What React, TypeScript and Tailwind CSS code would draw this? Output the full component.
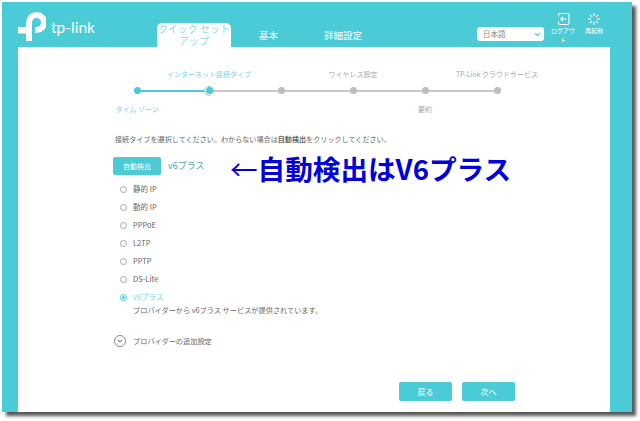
import { ChevronDown } from "lucide-react";

const jp = "font-['Noto_Sans_CJK_JP','Noto_Sans',sans-serif]";

const options = ["静的 IP", "動的 IP", "PPPoE", "L2TP", "PPTP", "DS-Lite"];

function Logo() {
  return (
    <svg width="28" height="30" viewBox="0 0 28 30" fill="none">
      <path
        d="M11 29 V10.5 a7.5 7.5 0 1 1 7.5 7.5 h-1.5"
        stroke="white"
        strokeWidth="6"
      />
      <rect x="0" y="15" width="11" height="6.5" fill="white" />
    </svg>
  );
}

function LogoutIcon() {
  return (
    <svg width="13" height="14" viewBox="0 0 13 14" fill="none" stroke="white" strokeWidth="1.1">
      <path d="M3 1.5 H10.5 a1.5 1.5 0 0 1 1.5 1.5 V11 a1.5 1.5 0 0 1 -1.5 1.5 H3 a1.5 1.5 0 0 1 -1.5 -1.5 V9.5 M1.5 4.5 V3 a1.5 1.5 0 0 1 1.5 -1.5" />
      <path d="M9.5 7 H4 M6 4.8 L3.8 7 L6 9.2" />
    </svg>
  );
}

function RebootIcon() {
  return (
    <svg width="14" height="14" viewBox="0 0 14 14" fill="none" stroke="white" strokeWidth="1.1">
      <path d="M7 1 V4.2 M7 9.8 V13 M1 7 H4.2 M9.8 7 H13 M2.8 2.8 L5 5 M9 9 L11.2 11.2 M11.2 2.8 L9 5 M5 9 L2.8 11.2" />
    </svg>
  );
}

function Dot() {
  return <span className="h-[7px] w-[7px] shrink-0 rounded-full bg-[#bdbdbd]" />;
}

function Radio({ checked }: { checked?: boolean }) {
  return (
    <span
      className={
        checked
          ? "flex h-[7px] w-[7px] items-center justify-center rounded-full border border-[#4acbd6]"
          : "h-[7px] w-[7px] rounded-full border border-[#a8a8a8]"
      }
    >
      {checked && <span className="h-[3px] w-[3px] rounded-full bg-[#4acbd6]" />}
    </span>
  );
}

export default function App() {
  return (
    <div className={`h-[421px] w-[640px] overflow-hidden bg-white p-[2px] ${jp}`}>
      <div className="flex h-[410px] w-[630px] flex-col bg-[#4acbd6] shadow-[4px_4px_3px_rgba(0,0,0,0.65)]">
        {/* header */}
        <header className="flex h-[45px] shrink-0 text-white">
          <div className="ml-[16px] mt-[10px] flex h-[30px] w-[139px] items-start">
            <Logo />
            <span className="ml-[5px] mt-[8px] font-['Lato',sans-serif] text-[15.5px] leading-none">tp-link</span>
          </div>
          <div className="mt-[21px] flex h-[24px] w-[74px] flex-col items-center rounded-t-[5px] bg-white text-center text-[10px] leading-[12px] text-[#8fdbe2]">
            <span>クイック セット</span>
            <span>アップ</span>
          </div>
          <span className="ml-[28px] mt-[27px] text-[9.5px] leading-[12px]">基本</span>
          <span className="ml-[46px] mt-[27px] w-[153px] text-[9.5px] leading-[12px]">詳細設定</span>
          <div className="mt-[25px] flex h-[14px] w-[67px] items-center justify-between rounded-[3px] bg-white pl-[6px] pr-[2px] text-[7.5px] text-[#8a8a8a]">
            <span>日本語</span>
            <ChevronDown size={9} strokeWidth={3} className="text-[#4acbd6]" />
          </div>
          <div className="ml-[6px] mt-[10px] flex w-[26px] flex-col items-center text-center text-[6px] leading-[9px]">
            <LogoutIcon />
            <span>ログアウト</span>
          </div>
          <div className="ml-[5px] mt-[10px] flex w-[26px] flex-col items-center text-center text-[6px] leading-[9px]">
            <RebootIcon />
            <span>再起動</span>
          </div>
        </header>

        {/* content */}
        <main className="relative ml-[16px] h-[365px] w-[592px] bg-white text-[#666]">
          {/* stepper */}
          <div className="ml-[83px] mt-[22px] grid w-[432px] grid-cols-6 text-center text-[7px] leading-[10px] text-[#a9a9a9]">
            <span />
            <span className="justify-self-center whitespace-nowrap text-[#7fd3dc]">インターネット接続タイプ</span>
            <span />
            <span className="justify-self-center whitespace-nowrap">ワイヤレス設定</span>
            <span />
            <span className="justify-self-center whitespace-nowrap">TP-Link クラウドサービス</span>
          </div>
          <div className="ml-[116px] mt-[7px] flex h-[9px] items-center">
            <span className="h-[7px] w-[7px] shrink-0 rounded-full bg-[#4acbd6]" />
            <span className="h-[2px] w-[63px] bg-[#4acbd6]" />
            <span className="flex h-[10px] w-[10px] shrink-0 items-center justify-center rounded-full border border-dotted border-[#2fb4c0]">
              <span className="h-[7px] w-[7px] rounded-full bg-[#4acbd6]" />
            </span>
            <span className="h-[2px] w-[64px] bg-[#c8c8c8]" />
            <Dot />
            <span className="h-[2px] w-[65px] bg-[#c8c8c8]" />
            <Dot />
            <span className="h-[2px] w-[65px] bg-[#c8c8c8]" />
            <Dot />
            <span className="h-[2px] w-[65px] bg-[#c8c8c8]" />
            <Dot />
          </div>
          <div className="ml-[83px] mt-[9px] grid w-[432px] grid-cols-6 text-center text-[7px] leading-[10px] text-[#a9a9a9]">
            <span className="justify-self-center whitespace-nowrap text-[#7fd3dc]">タイム ゾーン</span>
            <span />
            <span />
            <span />
            <span>要約</span>
            <span />
          </div>

          {/* form */}
          <p className="ml-[97px] mt-[19px] whitespace-nowrap text-[7.1px] leading-[12px]">
            接続タイプを選択してください。わからない場合は<b>自動検出</b>をクリックしてください。
          </p>
          <div className="ml-[95px] mt-[12px] flex items-center">
            <button className="h-[18px] w-[48px] rounded-[2px] bg-[#4acbd6] text-[7px] text-white">自動検出</button>
            <span className="ml-[7px] text-[9px] text-[#5a9fb0]">v6プラス</span>
          </div>
          <ul className="ml-[102px] mt-[8px] flex flex-col gap-[6px] text-[7.5px] leading-[12px]">
            {options.map((o) => (
              <li key={o} className="flex items-center gap-[6px]">
                <Radio />
                <span>{o}</span>
              </li>
            ))}
            <li className="flex items-center gap-[6px] text-[#7fd3dc]">
              <Radio checked />
              <span>v6プラス</span>
            </li>
          </ul>
          <p className="ml-[115px] mt-[1px] text-[7.2px] leading-[12px]">プロバイダーから v6プラス サービスが提供されています。</p>
          <div className="ml-[96px] mt-[19px] flex items-center gap-[7px] text-[7.2px] leading-[12px]">
            <span className="flex h-[12px] w-[12px] items-center justify-center rounded-full border border-[#8a8a8a]">
              <ChevronDown size={8} strokeWidth={3} />
            </span>
            <span>プロバイダーの追加設定</span>
          </div>
          <div className="ml-[381px] mt-[35px] flex gap-[10px] text-[8px] text-white">
            <button className="h-[19px] w-[53px] rounded-[2px] bg-[#4acbd6]">戻る</button>
            <button className="h-[19px] w-[53px] rounded-[2px] bg-[#4acbd6]">次へ</button>
          </div>

          {/* annotation */}
          <span className="absolute left-[212px] top-[104px] whitespace-nowrap text-[27.6px] font-bold leading-[34px] text-[#0000dd]">
            <span className="font-normal">←</span>自動検出はV6プラス
          </span>
        </main>
      </div>
    </div>
  );
}
